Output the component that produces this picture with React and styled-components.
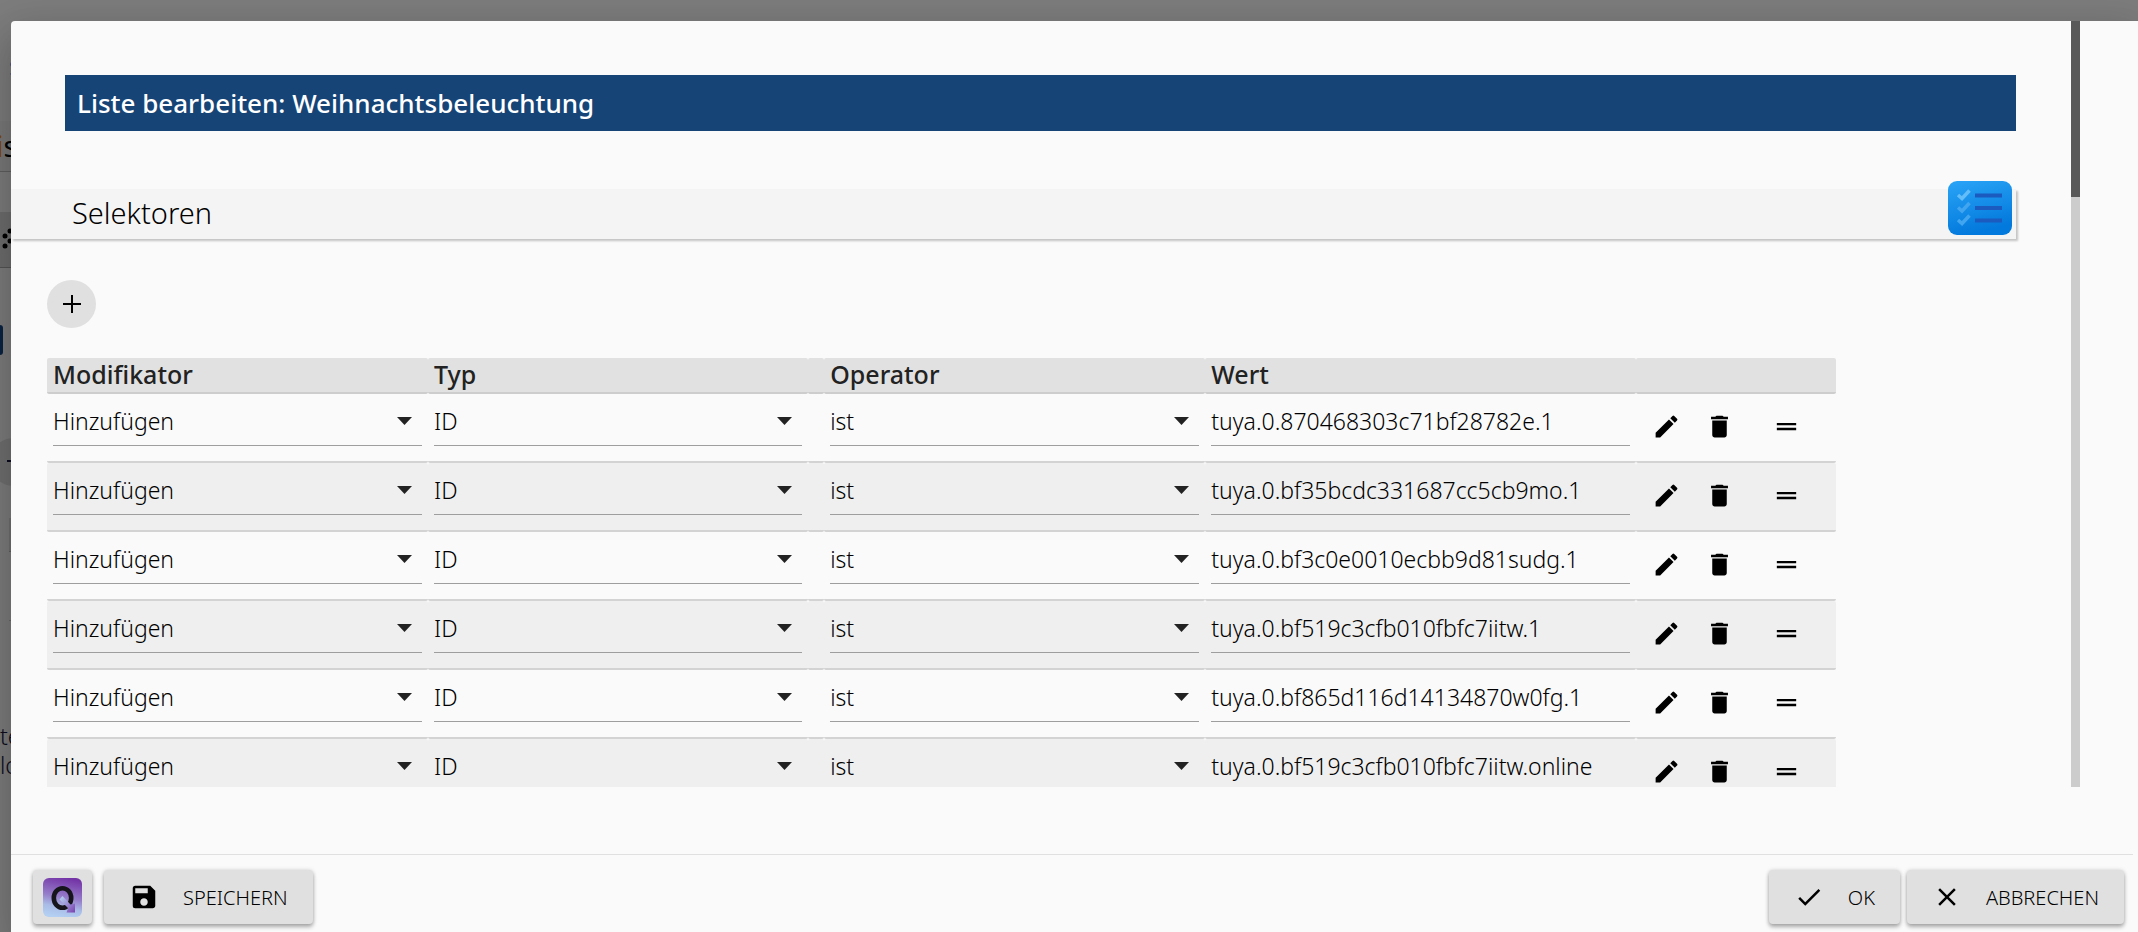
import React from "react";
import styled, { createGlobalStyle } from "styled-components";
import { MdCheck, MdClose, MdDelete, MdDragHandle, MdEdit, MdSave } from "react-icons/md";

const GlobalStyle = createGlobalStyle`
  *, *::before, *::after { box-sizing: border-box; }
  body {
    margin: 0;
    background: #7d7d7d;
    color: #000;
    font-family: "Noto Sans", "Open Sans", sans-serif;
    font-weight: 300;
  }
  button, input, select { font: inherit; color: inherit; }
`;

const Page = styled.div`
  display: flex;
  height: 100vh;
  overflow: hidden;
`;

/* The dimmed page that shows to the left of the dialog */
const Behind = styled.div`
  flex: 0 0 11px;
  overflow: hidden;
  display: flex;
  flex-direction: column;
  background: #7d7d7d;
  white-space: nowrap;
`;

const BehindLink = styled.div`
  height: 121px;
  padding: 52px 0 0 9px;
  font-size: 20px;
  line-height: 32px;
  color: #10527a;
`;

const BehindHeading = styled.div`
  height: 51px;
  border-bottom: 1px solid #606060;
  background: #7a7a7a;
  font-size: 29px;
  line-height: 50px;
  font-weight: 400;
  text-indent: -4px;
  span { color: #7d4b00; }
`;

const BehindButton = styled.div`
  height: 56px;
  margin-top: 40px;
  padding: 15px 0 0 2px;
  background: #6e6e6e;
  border-bottom: 1px solid #555;
`;

const BehindTab = styled.div`
  width: 3px;
  height: 30px;
  margin-top: 57px;
  border-radius: 0 3px 3px 0;
  background: #0b2544;
`;

const BehindRound = styled.div`
  flex: none;
  width: 48px;
  height: 48px;
  margin: 83px 0 0 -10px;
  padding: 22px 0 0 17px;
  border-radius: 50%;
  background: #707070;
  &::after {
    content: "";
    display: block;
    width: 14px;
    height: 2px;
    background: #0a0a20;
  }
`;

const BehindTable = styled.div`
  height: 103px;
  margin: 32px 0 0 9px;
  border-bottom: 1px solid #686868;
  &::before {
    content: "";
    display: block;
    height: 34px;
    background: #707070;
    border-bottom: 1px solid #606060;
  }
`;

const BehindText = styled.div`
  margin-top: 101px;
  font-size: 23px;
  line-height: 29px;
  color: #0c0c1c;
`;

const Dialog = styled.main`
  position: relative;
  flex: 1;
  min-width: 0;
  margin-top: 21px;
  display: flex;
  flex-direction: column;
  background: #fafafa;
  border-radius: 4px 0 0 0;
  box-shadow: 0 24px 38px 3px rgba(0, 0, 0, 0.14), 0 9px 46px 8px rgba(0, 0, 0, 0.12);
`;

const Body = styled.div`
  flex: 1;
  min-height: 0;
  display: flex;
  padding-right: 58px;
  margin-bottom: 67px;
`;

const Content = styled.div`
  flex: 1;
  min-width: 0;
  overflow: hidden;
  padding-top: 54px;
`;

const ScrollTrack = styled.div`
  flex: 0 0 9px;
  background: #ccc;
`;

const ScrollThumb = styled.div`
  height: 23%;
  background: #585858;
`;

const Title = styled.h1`
  margin: 0 55px 0 54px;
  padding: 0 12px;
  background: #164477;
  color: #fff;
  font-size: 26px;
  line-height: 56px;
  font-weight: 500;
`;

const SectionBar = styled.div`
  position: relative;
  margin: 58px 55px 0 0;
  padding: 0 0 2px 61px;
  background: #f4f4f4;
  box-shadow: 2px 2px 2px rgba(0, 0, 0, 0.22);
`;

const SectionTitle = styled.h2`
  margin: 0;
  font-size: 29px;
  line-height: 48px;
  font-weight: 300;
`;

const SectionIcon = styled.svg`
  position: absolute;
  right: 4px;
  bottom: 4px;
  width: 64px;
  height: 54px;
`;

const Section = styled.section`
  padding: 41px 235px 0 36px;
`;

const AddButton = styled.button`
  display: grid;
  place-items: center;
  width: 49px;
  height: 48px;
  margin-bottom: 30px;
  padding: 0;
  border: 0;
  border-radius: 50%;
  background: #e0e0e0;
`;

const Table = styled.table`
  width: 100%;
  table-layout: fixed;
  border-collapse: separate;
  border-spacing: 0;
`;

const Col = styled.col`
  width: ${(p) => p.$width};
`;

const HeadCell = styled.th`
  height: 36px;
  padding: 0 6px 2px;
  background: #e1e1e1;
  border-bottom: 2px solid #cdcdcd;
  border-radius: 2px;
  color: #222;
  font-size: 25px;
  line-height: 32px;
  font-weight: 500;
  text-align: left;
`;

const Row = styled.tr`
  &:nth-child(even) { background: #efefef; }
`;

const Cell = styled.td`
  height: 69px;
  padding: 2px 6px 15px;
  border-bottom: 2px solid #d3d3d3;
  border-radius: 2px;
`;

const Field = styled.div`
  position: relative;
  height: 50px;
  border-bottom: 1px solid #9e9e9e;
`;

const Select = styled.select`
  appearance: none;
  display: block;
  width: 100%;
  height: 49px;
  padding: 0;
  border: 0;
  background: transparent;
  font-size: 23px;
`;

const Caret = styled.svg`
  position: absolute;
  right: 10px;
  top: 21px;
  width: 15px;
  height: 8px;
  fill: #222;
  pointer-events: none;
`;

const Input = styled.input`
  display: block;
  width: 100%;
  height: 49px;
  padding: 0;
  border: 0;
  outline: 0;
  background: transparent;
  font-size: 23px;
`;

const Actions = styled.div`
  display: flex;
  align-items: center;
  height: 50px;
  padding: 10px 0 0 10px;
`;

const IconButton = styled.button`
  display: grid;
  place-items: center;
  width: 28px;
  height: 28px;
  margin-left: ${(p) => p.$gap}px;
  padding: 0;
  border: 0;
  background: transparent;
  font-size: 29px;
`;

const Footer = styled.footer`
  flex: none;
  display: flex;
  justify-content: space-between;
  height: 78px;
  margin-right: 5px;
  padding: 15px 9px 8px 22px;
  border-top: 1px solid #e0e0e0;
`;

const ButtonGroup = styled.div`
  display: flex;
  gap: ${(p) => p.$gap}px;
`;

const Button = styled.button`
  display: flex;
  align-items: center;
  gap: 24px;
  height: 54px;
  padding: 0 ${(p) => (p.$compact ? 10 : 25)}px;
  border: 0;
  border-radius: 4px;
  background: #e0e0e0;
  box-shadow: 0 3px 4px rgba(0, 0, 0, 0.3), 0 0 4px rgba(0, 0, 0, 0.15);
  font-size: 20px;
  text-transform: uppercase;
  svg { flex: none; }
`;

const ListIcon = () => (
  <SectionIcon viewBox="0 0 64 54" aria-hidden="true">
    <defs>
      <linearGradient id="list" x1="0" y1="0" x2="0.3" y2="1">
        <stop offset="0" stopColor="#2aa4f7" />
        <stop offset="1" stopColor="#0279dc" />
      </linearGradient>
    </defs>
    <rect width="64" height="54" rx="9" fill="url(#list)" />
    {[0, 12.5, 25].map((y, i) => (
      <g key={y} transform={`translate(0 ${y})`} fill="none">
        <path d="M10 14l4 3.500l7.500-8" stroke={i ? "#42a5f0" : "#63bdf8"} strokeWidth="3.500" />
        <path d="M27 14.500h27" stroke="#1b5abf" strokeWidth="4" />
      </g>
    ))}
  </SectionIcon>
);

const QIcon = () => (
  <svg width="39" height="39" viewBox="0 0 39 39" aria-hidden="true">
    <defs>
      <linearGradient id="qbg" x1="0.6" y1="0" x2="0.4" y2="1">
        <stop offset="0" stopColor="#7434a6" />
        <stop offset="0.5" stopColor="#967fcb" />
        <stop offset="0.75" stopColor="#a9bce6" />
        <stop offset="1" stopColor="#b3cff2" />
      </linearGradient>
      <linearGradient id="qarrow" x1="0" y1="0" x2="1" y2="1">
        <stop offset="0" stopColor="#b9dcf6" />
        <stop offset="1" stopColor="#7a3fae" />
      </linearGradient>
    </defs>
    <rect width="39" height="39" rx="6" fill="url(#qbg)" />
    <ellipse cx="19.500" cy="20" rx="8.700" ry="9.800" fill="none" stroke="#17151c" strokeWidth="4.600" />
    <path d="M19.500 18l8 8.500 4.500-1v9h-8.500l1.500-4.500-8.500-8.500z" fill="url(#qarrow)" />
  </svg>
);

const values = [
  "tuya.0.870468303c71bf28782e.1",
  "tuya.0.bf35bcdc331687cc5cb9mo.1",
  "tuya.0.bf3c0e0010ecbb9d81sudg.1",
  "tuya.0.bf519c3cfb010fbfc7iitw.1",
  "tuya.0.bf865d116d14134870w0fg.1",
  "tuya.0.bf519c3cfb010fbfc7iitw.online",
];

const Dropdown = ({ label, value }) => (
  <Field>
    <Select aria-label={label} defaultValue={value}>
      <option>{value}</option>
    </Select>
    <Caret viewBox="0 0 15 8" aria-hidden="true">
      <path d="M0 0h15l-7.500 8z" />
    </Caret>
  </Field>
);

const SelectorRow = ({ value }) => (
  <Row>
    <Cell><Dropdown label="Modifikator" value="Hinzufügen" /></Cell>
    <Cell><Dropdown label="Typ" value="ID" /></Cell>
    <Cell />
    <Cell><Dropdown label="Operator" value="ist" /></Cell>
    <Cell>
      <Field><Input aria-label="Wert" defaultValue={value} /></Field>
    </Cell>
    <Cell>
      <Actions>
        <IconButton aria-label="Bearbeiten" $gap={0}><MdEdit /></IconButton>
        <IconButton aria-label="Löschen" $gap={25}><MdDelete /></IconButton>
        <IconButton aria-label="Verschieben" $gap={39}><MdDragHandle /></IconButton>
      </Actions>
    </Cell>
  </Row>
);

export default function App() {
  return (
    <>
      <GlobalStyle />
      <Page>
        <Behind aria-hidden="true">
          <BehindLink>S</BehindLink>
          <BehindHeading><span>i</span>s</BehindHeading>
          <BehindButton>
            <svg width="12" height="22" viewBox="0 0 12 22">
              <circle cx="8" cy="4" r="2.500" />
              <circle cx="3" cy="9" r="2.500" />
              <circle cx="8" cy="14" r="2.500" />
              <circle cx="3" cy="19" r="2.500" />
            </svg>
          </BehindButton>
          <BehindTab />
          <BehindRound />
          <BehindTable />
          <BehindText>te<br />lo</BehindText>
        </Behind>
        <Dialog>
          <Body>
            <Content>
              <Title>Liste bearbeiten: Weihnachtsbeleuchtung</Title>
              <SectionBar>
                <SectionTitle>Selektoren</SectionTitle>
                <ListIcon />
              </SectionBar>
              <Section>
                <AddButton aria-label="Neu">
                  <svg width="18" height="18" viewBox="0 0 18 18" stroke="#000" strokeWidth="2">
                    <path d="M9 0v18M0 9h18" />
                  </svg>
                </AddButton>
                <Table>
                  <colgroup>
                    <Col $width="21.3%" />
                    <Col $width="21.25%" />
                    <Col $width="16px" />
                    <Col $width="21.3%" />
                    <Col />
                    <Col $width="200px" />
                  </colgroup>
                  <thead>
                    <tr>
                      <HeadCell>Modifikator</HeadCell>
                      <HeadCell>Typ</HeadCell>
                      <HeadCell />
                      <HeadCell>Operator</HeadCell>
                      <HeadCell>Wert</HeadCell>
                      <HeadCell />
                    </tr>
                  </thead>
                  <tbody>
                    {values.map((value) => (
                      <SelectorRow key={value} value={value} />
                    ))}
                  </tbody>
                </Table>
              </Section>
            </Content>
            <ScrollTrack><ScrollThumb /></ScrollTrack>
          </Body>
          <Footer>
            <ButtonGroup $gap={12}>
              <Button $compact aria-label="Matrix"><QIcon /></Button>
              <Button><MdSave size={30} />Speichern</Button>
            </ButtonGroup>
            <ButtonGroup $gap={7}>
              <Button><MdCheck size={30} />OK</Button>
              <Button><MdClose size={30} />Abbrechen</Button>
            </ButtonGroup>
          </Footer>
        </Dialog>
      </Page>
    </>
  );
}
